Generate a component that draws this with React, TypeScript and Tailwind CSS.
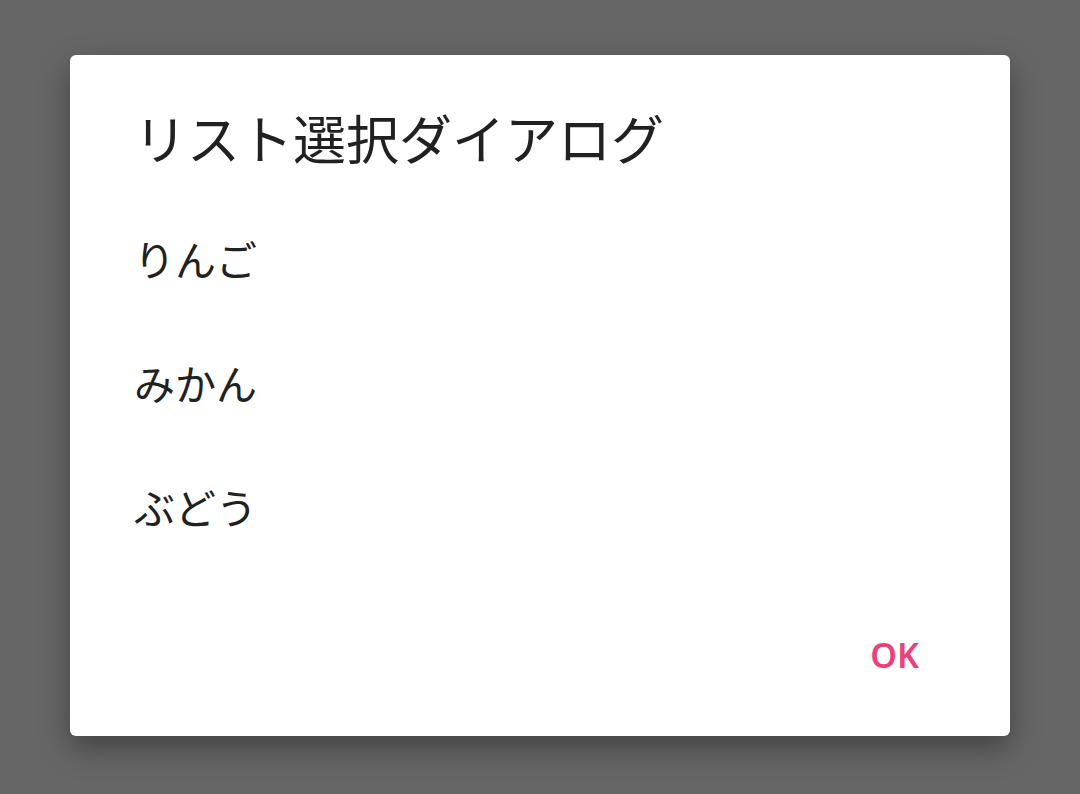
const items = ['りんご', 'みかん', 'ぶどう'];

export default function App() {
  return (
    <div
      className="flex h-[794px] w-[1080px] items-start justify-start bg-[#666666]"
      style={{ fontFamily: '"Noto Sans CJK JP", "Noto Sans", Roboto, sans-serif' }}
    >
      <div className="ml-[70px] mt-[55px] flex h-[681px] w-[940px] flex-col rounded-[6px] bg-white shadow-[0_12px_30px_rgba(0,0,0,0.35)]">
        <h1 className="pl-[64px] pt-[56px] text-[53px] font-normal leading-[53px] text-[#212121]">
          リスト選択ダイアログ
        </h1>
        <ul className="mt-[32px]">
          {items.map((item) => (
            <li
              key={item}
              className="flex h-[124px] items-center pl-[64px] text-[41px] leading-none text-[#212121]"
            >
              {item}
            </li>
          ))}
        </ul>
        <div className="flex flex-1 items-start justify-end pr-[91px] pt-[70px]">
          <button
            className="text-[34px] font-semibold leading-[34px] text-[#ec407a]"
            style={{ fontFamily: '"Noto Sans", Roboto, sans-serif' }}
          >
            OK
          </button>
        </div>
      </div>
    </div>
  );
}
